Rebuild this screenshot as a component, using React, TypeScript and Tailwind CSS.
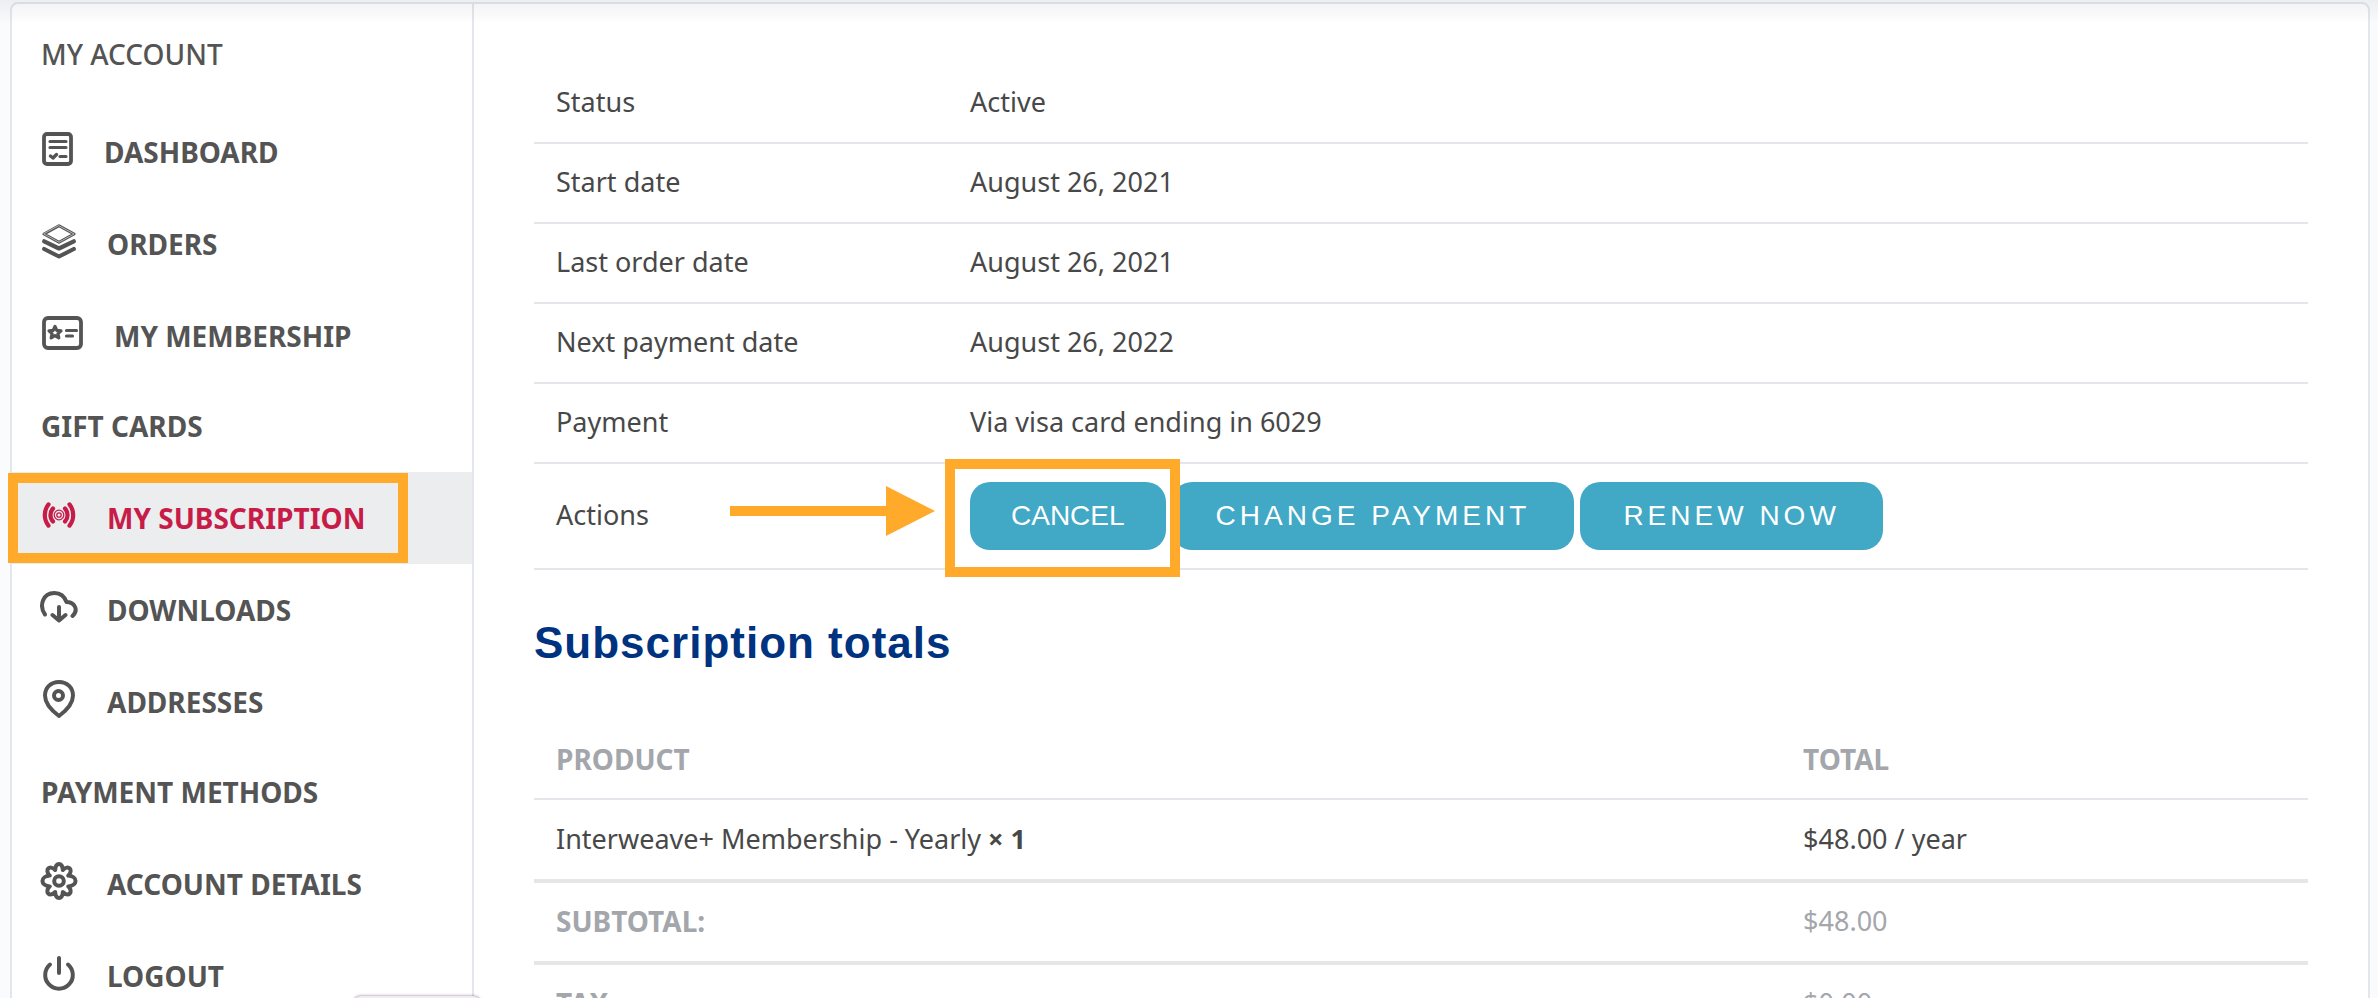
import React from "react";

type NavItem = { label: string; icon?: React.ReactNode; active?: boolean };

const DashboardIcon = () => (
  <svg className="w-[31px] h-[34px]" viewBox="0 0 31 34" fill="none" stroke="currentColor" strokeLinecap="round" strokeLinejoin="round">
    <rect x="2" y="2" width="27" height="30" rx="3" strokeWidth="3.8" />
    <path d="M8 9.5h16M8 15.5h16M18 24.5h6" strokeWidth="3.2" />
    <path d="M8.5 24l2.5 2 3.5-3.5" strokeWidth="3.4" />
  </svg>
);

const LayersIcon = () => (
  <svg className="w-[34px] h-[35px]" viewBox="0 0 34 35" fill="none" stroke="currentColor" strokeLinecap="round" strokeLinejoin="round">
    <path d="M17 1.8L32 10 17 18.2 2 10z" strokeWidth="3" />
    <path d="M17 1.8L32 10 17 18.2 2 10z" stroke="#b5b5b5" strokeWidth="1" />
    <path d="M2.2 17.3l14.8 7.2 14.8-7.2M2.2 25L17 32.5 31.8 25" strokeWidth="4.2" />
  </svg>
);

const MembershipIcon = () => (
  <svg className="w-[41px] h-[34px]" viewBox="0 0 41 34" fill="none" stroke="currentColor" strokeLinecap="round" strokeLinejoin="round">
    <rect x="2" y="2" width="37" height="30" rx="4" strokeWidth="3.8" />
    <path d="M13 10.5l1.8 3.9 4.2.4-3.1 2.8.9 4.3-3.8-2.2-3.8 2.2.9-4.3L7 14.8l4.2-.4z" strokeWidth="3.2" />
    <path d="M24.5 14.5h10M24.5 20h6" strokeWidth="3.2" />
  </svg>
);

const BroadcastIcon = () => (
  <svg className="w-[34px] h-[26px]" viewBox="0 0 34 26" fill="none" stroke="currentColor" strokeLinecap="round">
    <circle cx="17" cy="13" r="4.8" strokeWidth="1.3" />
    <circle cx="17" cy="13" r="2.2" strokeWidth="1.3" />
    <path d="M11 6.5a9.5 9.5 0 0 0 0 13M23 6.5a9.5 9.5 0 0 1 0 13M6.5 2.4a17 17 0 0 0 0 21.2M27.5 2.4a17 17 0 0 1 0 21.2" strokeWidth="4.2" />
  </svg>
);

const DownloadIcon = () => (
  <svg className="w-[38px] h-[32px] -mx-[2px]" viewBox="0 0 38 32" fill="none" stroke="currentColor" strokeWidth="4" strokeLinecap="round" strokeLinejoin="round">
    <path d="M5 23.5C-1 15 2.5 2 14.5 2 20 2 24.5 5.5 26.5 11c8 0 12.5 8 6 14" />
    <path d="M19 16v13M12.5 24l6.5 5.5 6.5-5.5" />
  </svg>
);

const PinIcon = () => (
  <svg className="w-[34px] h-[38px]" viewBox="0 0 34 38" fill="none" stroke="currentColor" strokeWidth="4" strokeLinejoin="round">
    <path d="M17 2C8.5 2 3 8 3 15.5 3 25 11 31.5 17 36c6-4.5 14-11 14-20.5C31 8 25.5 2 17 2z" />
    <circle cx="16.5" cy="15.5" r="4.5" />
  </svg>
);

const GearIcon = () => (
  <svg className="w-[38px] h-[38px] -mx-[2px]" viewBox="0 0 38 38" fill="none" stroke="currentColor" strokeWidth="4" strokeLinejoin="round">
    <circle cx="19" cy="19" r="4.8" />
    <path d="M15.2 8C15 0 23 0 22.8 8c5.5-5.8 11.3 0 5.4 5.6C38 14.5 38 23.5 28.2 24.4c5.9 5.6.1 11.4-5.4 5.6C23 38 15 38 15.2 30c-5.5 5.8-11.3 0-5.4-5.6C0 23.5 0 14.5 9.8 13.6 3.9 8 9.7 2.2 15.2 8z" />
  </svg>
);

const PowerIcon = () => (
  <svg className="w-[34px] h-[36px]" viewBox="0 0 34 36" fill="none" stroke="currentColor" strokeWidth="4" strokeLinecap="round">
    <path d="M17 3v15M8 9.5a13.8 13.8 0 1 0 18 0" />
  </svg>
);

const navItems: NavItem[] = [
  { label: "DASHBOARD", icon: <DashboardIcon /> },
  { label: "ORDERS", icon: <LayersIcon /> },
  { label: "MY MEMBERSHIP", icon: <MembershipIcon /> },
  { label: "GIFT CARDS" },
  { label: "MY SUBSCRIPTION", icon: <BroadcastIcon />, active: true },
  { label: "DOWNLOADS", icon: <DownloadIcon /> },
  { label: "ADDRESSES", icon: <PinIcon /> },
  { label: "PAYMENT METHODS" },
  { label: "ACCOUNT DETAILS", icon: <GearIcon /> },
  { label: "LOGOUT", icon: <PowerIcon /> },
];

const details = [
  { label: "Status", value: "Active" },
  { label: "Start date", value: "August 26, 2021" },
  { label: "Last order date", value: "August 26, 2021" },
  { label: "Next payment date", value: "August 26, 2022" },
  { label: "Payment", value: "Via visa card ending in 6029" },
];

const Sidebar: React.FC = () => (
  <aside className="w-[462px] shrink-0 border-r-2 border-[#e3e7eb] text-[28px] text-[#545454]">
    <h2 className="flex h-[102px] items-center px-[29px] pb-[2px] font-medium">MY ACCOUNT</h2>
    <nav>
      <ul>
        {navItems.map(({ label, icon, active }) => (
          <li key={label} className={active ? "relative bg-[#ecedef] text-[#c81c48]" : ""}>
            <a href="#" className={`flex items-center font-bold ${icon ? "h-[92px] px-[30px]" : "h-[90px] px-[29px] pb-[2px]"}`}>
              {icon && <span className="mr-[31px] mb-[6px]">{icon}</span>}
              {label}
            </a>
            {active && <div className="pointer-events-none absolute inset-y-px -left-1 w-[400px] border-10 border-[#ffaa2a]" />}
          </li>
        ))}
      </ul>
    </nav>
  </aside>
);

const buttonClass = "h-[68px] rounded-[20px] bg-[#41a8c6] font-['Liberation_Sans',Arial,sans-serif] text-[28px] text-white";

const DetailsTable: React.FC = () => (
  <table className="w-full table-fixed border-collapse text-left">
    <tbody>
      {details.map(({ label, value }) => (
        <tr key={label} className="h-20 border-b-2 border-[#e3e7eb]">
          <th scope="row" className="w-[414px] px-[22px] pb-px font-normal">{label}</th>
          <td className="px-[22px] pb-px">{value}</td>
        </tr>
      ))}
      <tr className="h-[106px] border-b-2 border-[#e3e7eb]">
        <th scope="row" className="relative px-[22px] pb-px font-normal">
          Actions
          <svg className="absolute left-[196px] top-[22px] h-[50px] w-[205px]" viewBox="0 0 205 50" fill="#ffaa2a">
            <path d="M0 20h156V0l49 25-49 25V30H0z" />
          </svg>
        </th>
        <td className="px-[22px]">
          <div className="flex gap-[6px]">
            <div className="relative z-10">
              <button type="button" className={`${buttonClass} px-[41px]`}>CANCEL</button>
              <div className="pointer-events-none absolute -left-[25px] -right-[14px] -top-[23px] -bottom-[27px] border-10 border-[#ffaa2a]" />
            </div>
            <button type="button" className={`${buttonClass} px-[44px] tracking-[4px]`}>CHANGE PAYMENT</button>
            <button type="button" className={`${buttonClass} px-[43px] tracking-[4px]`}>RENEW NOW</button>
          </div>
        </td>
      </tr>
    </tbody>
  </table>
);

const TotalsTable: React.FC = () => (
  <table className="w-full table-fixed border-collapse text-left">
    <thead>
      <tr className="h-20 border-b-2 border-[#e3e7eb] text-[28px] text-[#a3a6ab]">
        <th scope="col" className="w-[70.3%] px-[22px] font-bold">PRODUCT</th>
        <th scope="col" className="px-[22px] font-bold">TOTAL</th>
      </tr>
    </thead>
    <tbody>
      <tr className="h-[82px] border-b-4 border-[#e4e6e8]">
        <td className="px-[22px] pb-px">Interweave+ Membership - Yearly <strong>× 1</strong></td>
        <td className="px-[22px] pb-px">$48.00 / year</td>
      </tr>
    </tbody>
    <tfoot className="text-[#a3a6ab]">
      <tr className="h-[82px] border-b-4 border-[#e4e6e8]">
        <th scope="row" className="px-[22px] pb-[3px] text-[28px] font-bold">SUBTOTAL:</th>
        <td className="px-[22px] pb-px">$48.00</td>
      </tr>
      <tr className="h-[82px] border-b-4 border-[#e4e6e8]">
        <th scope="row" className="px-[22px] pb-[3px] text-[28px] font-bold">TAX:</th>
        <td className="px-[22px] pb-px">$0.00</td>
      </tr>
    </tfoot>
  </table>
);

const App: React.FC = () => {
  return (
    <div className="relative h-screen overflow-hidden bg-[#fafbfd] pl-[10px] pt-[2px] pr-2 font-['Noto_Sans',sans-serif] text-[27px] text-[#484848]">
      <div className="flex rounded-[8px] border-2 border-[#e3e7eb] bg-white">
        <Sidebar />
        <main className="min-w-0 flex-1 px-[60px] pt-[59px]">
          <DetailsTable />
          <h2 className="mt-[47px] mb-[50px] font-['Liberation_Sans',Arial,sans-serif] text-[44px] leading-[52px] font-bold tracking-[1px] text-[#00337f]">
            Subscription totals
          </h2>
          <TotalsTable />
        </main>
      </div>
      {/* shadow cast by the site header */}
      <div className="pointer-events-none absolute inset-x-0 top-0 h-6 bg-gradient-to-b from-[#1e1e460f] to-transparent" />
      <div className="absolute -bottom-[30px] left-[353px] h-8 w-[128px] rounded-[8px] bg-[#f3eaf6] shadow-[0_0_3px_#00000080]" />
    </div>
  );
};

export default App;
